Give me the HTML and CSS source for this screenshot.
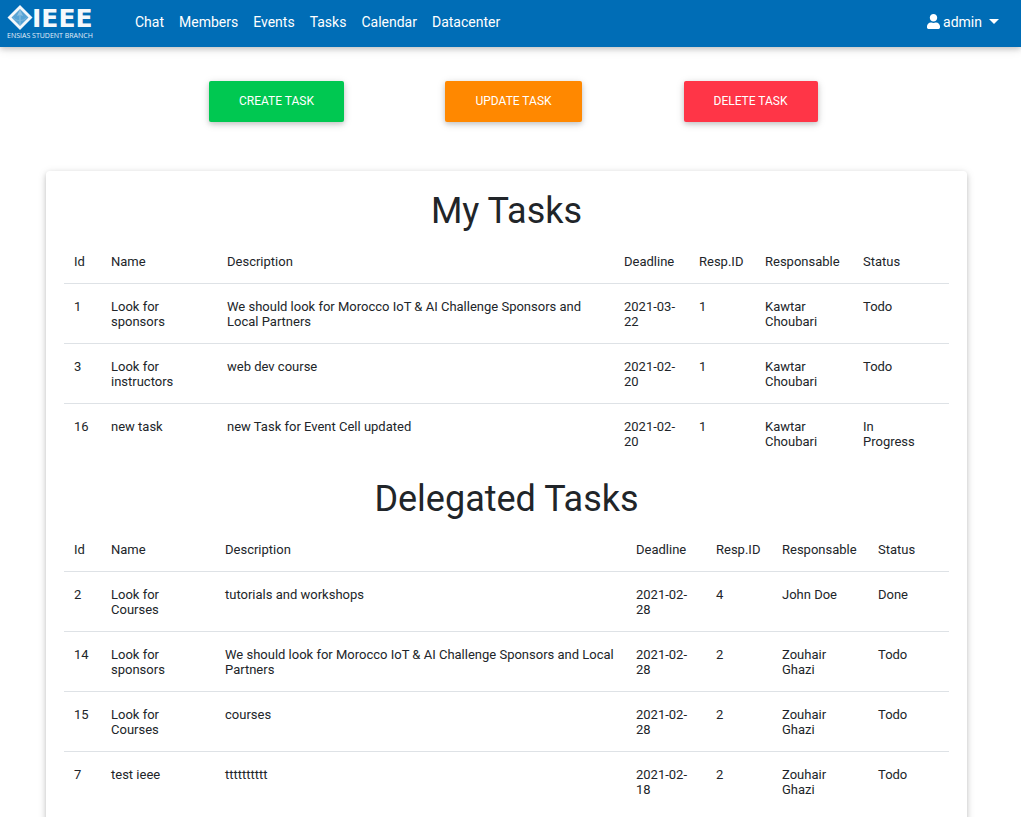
FILE: index.html
```html
<!DOCTYPE html>
<html lang="en">
<head>
<meta charset="utf-8">
<meta name="viewport" content="width=device-width, initial-scale=1">
<title>Tasks</title>
<link rel="stylesheet" href="styles.css">
</head>
<body>
<header class="navbar">
  <a class="brand" href="#" aria-label="IEEE ENSIAS Student Branch">
    <svg class="logo" viewBox="0 0 88 38" width="88" height="38">
      <path d="M15 0 27.500 12.500 15 25 2.500 12.500Z" fill="#f4f8fb"/>
      <path d="M15 4 23.500 12.500 15 21 6.500 12.500Z" fill="#58a4d5"/>
      <path d="M15 4.500 18 11 15 10 12 11Z" fill="#8cc0e2"/>
      <path d="M14.500 10h1v10h-1z" fill="#8cc0e2"/>
      <path d="M8.500 12.500c1 4 11 4 13 0" fill="none" stroke="#7ab6dd"/>
      <text class="logo-name" x="27" y="22">IEEE</text>
      <text class="logo-sub" x="2" y="33">ENSIAS STUDENT BRANCH</text>
    </svg>
  </a>
  <nav class="links">
    <a href="#">Chat</a>
    <a href="#">Members</a>
    <a href="#">Events</a>
    <a href="#">Tasks</a>
    <a href="#">Calendar</a>
    <a href="#">Datacenter</a>
  </nav>
  <button class="account" type="button">
    <svg class="user" viewBox="0 0 448 512" width="13" height="15"><path fill="#fff" d="M224 256c70.700 0 128-57.300 128-128S294.700 0 224 0 96 57.300 96 128s57.300 128 128 128zm89.600 32h-16.700c-22.200 10.200-46.900 16-72.900 16s-50.600-5.800-72.900-16h-16.700C60.200 288 0 348.200 0 422.400V464c0 26.500 21.500 48 48 48h352c26.500 0 48-21.500 48-48v-41.600c0-74.200-60.200-134.400-134.400-134.400z"/></svg>
    <span>admin</span>
    <span class="caret"></span>
  </button>
</header>
<main>
  <div class="actions">
    <button class="btn create" type="button">CREATE TASK</button>
    <button class="btn update" type="button">UPDATE TASK</button>
    <button class="btn delete" type="button">DELETE TASK</button>
  </div>
  <section class="card">
    <h1>My Tasks</h1>
    <table class="tasks">
      <colgroup><col class="c-id"><col class="c-name"><col><col class="c-deadline"><col class="c-rid"><col class="c-resp"><col class="c-status"></colgroup>
      <thead>
        <tr><th>Id</th><th>Name</th><th>Description</th><th>Deadline</th><th>Resp.ID</th><th>Responsable</th><th>Status</th></tr>
      </thead>
      <tbody>
        <tr><td>1</td><td>Look for sponsors</td><td>We should look for Morocco IoT &amp; AI Challenge Sponsors and Local Partners</td><td>2021-03-22</td><td>1</td><td>Kawtar Choubari</td><td>Todo</td></tr>
        <tr><td>3</td><td>Look for instructors</td><td>web dev course</td><td>2021-02-20</td><td>1</td><td>Kawtar Choubari</td><td>Todo</td></tr>
        <tr><td>16</td><td>new task</td><td>new Task for Event Cell updated</td><td>2021-02-20</td><td>1</td><td>Kawtar Choubari</td><td>In Progress</td></tr>
      </tbody>
    </table>
    <h1>Delegated Tasks</h1>
    <table class="tasks delegated">
      <colgroup><col class="c-id"><col class="c-name"><col><col class="c-deadline"><col class="c-rid"><col class="c-resp"><col class="c-status"></colgroup>
      <thead>
        <tr><th>Id</th><th>Name</th><th>Description</th><th>Deadline</th><th>Resp.ID</th><th>Responsable</th><th>Status</th></tr>
      </thead>
      <tbody>
        <tr><td>2</td><td>Look for Courses</td><td>tutorials and workshops</td><td>2021-02-28</td><td>4</td><td>John Doe</td><td>Done</td></tr>
        <tr><td>14</td><td>Look for sponsors</td><td>We should look for Morocco IoT &amp; AI Challenge Sponsors and Local Partners</td><td>2021-02-28</td><td>2</td><td>Zouhair Ghazi</td><td>Todo</td></tr>
        <tr><td>15</td><td>Look for Courses</td><td>courses</td><td>2021-02-28</td><td>2</td><td>Zouhair Ghazi</td><td>Todo</td></tr>
        <tr><td>7</td><td>test ieee</td><td>tttttttttt</td><td>2021-02-18</td><td>2</td><td>Zouhair Ghazi</td><td>Todo</td></tr>
      </tbody>
    </table>
  </section>
</main>
</body>
</html>
```

FILE: styles.css
```css
* { box-sizing: border-box; }
html { scrollbar-width: none; }
body {
  margin: 0;
  background: #fff;
  color: #212529;
  font-family: Roboto, sans-serif;
  font-size: 14px;
  font-weight: 400;
}
.navbar {
  display: flex;
  align-items: center;
  height: 47px;
  padding: 0 22px 0 5px;
  background: #006db6;
  box-shadow: 0 2px 5px rgba(0, 0, 0, .16), 0 2px 10px rgba(0, 0, 0, .12);
}
.brand { display: flex; margin-right: 42px; }
.logo { overflow: visible; }
.logo-name { font: 700 25px "DejaVu Sans", sans-serif; fill: #f4f8fb; }
.logo-sub { font: 400 7px "Open Sans", sans-serif; fill: #e3eff8; }
.links { display: flex; gap: 15px; flex: 1; padding-bottom: 4px; }
.links a { color: #fff; text-decoration: none; }
.account {
  display: flex;
  align-items: center;
  gap: 3px;
  padding: 0 0 4px;
  border: 0;
  background: none;
  color: #fff;
  font: 400 14px Roboto, sans-serif;
}
.caret {
  margin-left: 4px;
  border: 5px solid transparent;
  border-top-color: #fff;
  border-bottom: 0;
}
.actions {
  display: grid;
  grid-template-columns: repeat(3, 1fr);
  justify-items: center;
  padding: 34px 152px 49px 158px;
}
.btn {
  height: 41px;
  padding: 0 30px 2px;
  border: 0;
  border-radius: 2px;
  color: #fff;
  font: 400 12px Roboto, sans-serif;
  white-space: nowrap;
  box-shadow: 0 2px 5px rgba(0, 0, 0, .16), 0 2px 10px rgba(0, 0, 0, .12);
}
.create { background: #00c851; }
.update { background: #ff8800; }
.delete { background: #ff3547; }
.card {
  margin: 0 54px 30px 46px;
  padding: 5px 18px 18px;
  border-radius: 4px;
  box-shadow: 0 2px 5px rgba(0, 0, 0, .16), 0 2px 10px rgba(0, 0, 0, .12);
}
h1 {
  margin: 15px 0 7px;
  font-size: 36px;
  font-weight: 400;
  line-height: 43px;
  text-align: center;
}
.card h1:first-child { margin-top: 14px; }
.tasks {
  width: 100%;
  table-layout: fixed;
  border-collapse: separate;
  border-spacing: 0;
  font-size: 13px;
  line-height: 15px;
}
.tasks th, .tasks td {
  padding: 15px 10px 14px;
  font-weight: 400;
  text-align: left;
  vertical-align: top;
}
.tasks th { padding-top: 14px; }
.tasks td { border-top: 1px solid #dee2e6; }
.tasks td:last-child { padding-right: 30px; }
.c-id { width: 37px; }
.c-name { width: 116px; }
.c-deadline { width: 75px; }
.c-rid { width: 66px; }
.c-resp { width: 98px; }
.c-status { width: 96px; }
.delegated .c-name { width: 114px; }
.delegated .c-deadline { width: 80px; }
.delegated .c-resp { width: 96px; }
.delegated .c-status { width: 81px; }
```
